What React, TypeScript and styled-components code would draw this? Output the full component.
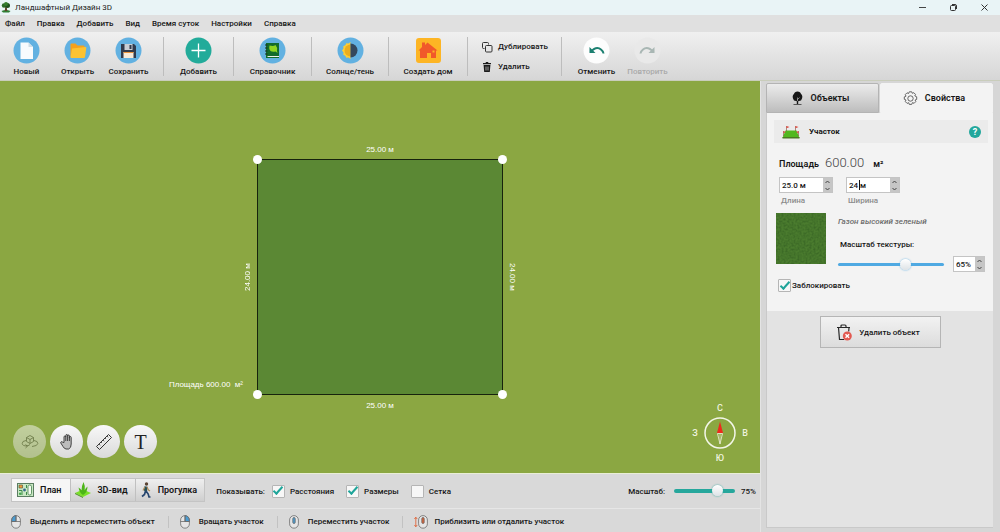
import React from 'react';
import styled, { createGlobalStyle, css } from 'styled-components';

const GlobalStyle = createGlobalStyle`
  *, *::before, *::after { box-sizing: border-box; }
  body {
    margin: 0;
    background: #d9d9d9;
    color: #161616;
    font-family: Roboto, "Liberation Sans", sans-serif;
    font-size: 8px;
    font-weight: 500;
  }
  button, input { font: inherit; color: inherit; }
  button { border: 0; padding: 0; background: none; cursor: pointer; }
  svg { display: block; flex: none; }
`;

const Page = styled.div`
  min-height: 100vh;
  display: flex;
  flex-direction: column;
`;

/* Window title and menu */
const TitleBar = styled.header`
  height: 15px;
  display: flex;
  align-items: center;
  justify-content: space-between;
  background: #e9f4f6;
`;
const AppTitle = styled.h1`
  margin: 0;
  padding-left: 1px;
  display: flex;
  align-items: center;
  gap: 4px;
  font-size: 8px;
  font-weight: 400;
  line-height: 14px;
  color: #222;
`;
const WindowControls = styled.div`
  display: flex;
`;
const WindowButton = styled.button`
  width: 31px;
  height: 15px;
  display: grid;
  place-items: center;
`;
const MenuBar = styled.nav`
  height: 17px;
  padding: 0 5px;
  display: flex;
  align-items: center;
  gap: 12px;
  background: #e0e0e0;
`;
const MenuItem = styled.button`
  line-height: 17px;
`;

/* Toolbar */
const Toolbar = styled.div`
  height: 49px;
  padding-left: 1px;
  display: flex;
  background: linear-gradient(#f0f0f0, #d6d6d6);
  border-bottom: 1px solid #c9cdbb;
`;
const ToolGroup = styled.div<{ $width: number; $last?: boolean; $start?: boolean }>`
  min-width: ${(p) => p.$width}px;
  margin: 5px 0 4px;
  display: flex;
  align-items: flex-start;
  justify-content: ${(p) => (p.$start ? 'flex-start' : 'center')};
  border-right: ${(p) => (p.$last ? 0 : '1px solid #bdbdbd')};
`;
const ToolButton = styled.button`
  min-width: 51px;
  display: flex;
  flex-direction: column;
  align-items: center;
  line-height: 16px;
  white-space: nowrap;
  &:disabled { color: #aaa; cursor: default; }
`;
const SmallTools = styled.div`
  padding-top: 2px;
  display: flex;
  flex-direction: column;
  gap: 5px;
`;
const SmallTool = styled.button`
  height: 15px;
  display: flex;
  align-items: center;
  gap: 5px;
`;

/* Workspace */
const Workspace = styled.div`
  flex: 1;
  display: flex;
`;
const Main = styled.main`
  flex: 1;
  min-width: 0;
  display: flex;
  flex-direction: column;
`;
const Canvas = styled.section`
  position: relative;
  flex: 1;
  min-height: 392px;
  overflow: hidden;
  background: #8ba742;
  color: #fff;
  font: 400 8px/10px "Liberation Sans", sans-serif;
`;
const Plot = styled.div`
  position: absolute;
  left: 257px;
  top: 78px;
  width: 246px;
  height: 236px;
  background: #5b8834;
  border: 1px solid #17230d;
`;
const Handle = styled.span<{ $x: 'left' | 'right'; $y: 'top' | 'bottom' }>`
  position: absolute;
  ${(p) => p.$x}: -5px;
  ${(p) => p.$y}: -5px;
  width: 9px;
  height: 9px;
  border-radius: 50%;
  background: #fff;
`;
const edges = {
  top: css`bottom: 100%; left: 0; right: 0; margin-bottom: 5px; text-align: center;`,
  bottom: css`top: 100%; left: 0; right: 0; margin-top: 7px; text-align: center;`,
  left: css`right: 100%; top: 0; bottom: 0; margin-right: 5px; text-align: center; writing-mode: vertical-rl; transform: rotate(180deg);`,
  right: css`left: 100%; top: 0; bottom: 0; margin-left: 5px; text-align: center; writing-mode: vertical-rl;`,
};
const EdgeLabel = styled.span<{ $edge: keyof typeof edges }>`
  position: absolute;
  ${(p) => edges[p.$edge]}
`;
const AreaLabel = styled.span`
  position: absolute;
  right: 100%;
  bottom: 4px;
  margin-right: 15px;
  white-space: pre;
`;
const CanvasTools = styled.div`
  position: absolute;
  left: 13px;
  bottom: 15px;
  display: flex;
  gap: 4px;
`;
const RoundTool = styled.button`
  width: 33px;
  height: 33px;
  display: grid;
  place-items: center;
  border-radius: 50%;
  background: linear-gradient(#f8f8f8, #dadada);
  color: #222;
  &:disabled { opacity: 0.5; }
`;
const TextGlyph = styled.span`
  font: 400 20px/22px "Liberation Serif", serif;
`;
const Compass = styled.div`
  position: absolute;
  right: 9px;
  bottom: 9px;
  display: grid;
  grid-template-columns: 12px 32px 12px;
  grid-template-rows: 12px 32px 12px;
  gap: 3px;
  place-items: center;
  font: 500 9px/12px Roboto, sans-serif;
  color: #eef3df;
`;
const North = styled.span`grid-area: 1 / 2;`;
const West = styled.span`grid-area: 2 / 1;`;
const Dial = styled.svg`grid-area: 2 / 2;`;
const East = styled.span`grid-area: 2 / 3;`;
const South = styled.span`grid-area: 3 / 2;`;

/* View switch and display options */
const ViewBar = styled.div`
  height: 36px;
  padding: 0 4px 0 11px;
  display: flex;
  align-items: center;
  background: #d9d9d9;
  border-top: 1px solid #e9eed6;
  border-bottom: 1px solid #e6e6e6;
`;
const Segments = styled.div`
  display: flex;
  height: 24px;
  margin: 0 11px 3px 0;
  border: 1px solid #c4c4c4;
`;
const Segment = styled.button<{ $active?: boolean }>`
  padding: 0 ${(p) => (p.$active ? 9 : 7)}px 0 ${(p) => (p.$active ? 5 : 4)}px;
  display: flex;
  align-items: center;
  gap: 6px;
  font-size: 9px;
  font-weight: 600;
  background: ${(p) => (p.$active ? '#f6f6f6' : 'linear-gradient(#efefef, #cfcfcf)')};
  & + & { border-left: 1px solid #c0c0c0; }
`;
const Options = styled.div`
  display: flex;
  align-items: center;
  gap: 12px;
`;
const OptionsTitle = styled.span`
  margin-right: -5px;
`;
const CheckLabel = styled.label<{ $gap: number }>`
  display: flex;
  align-items: center;
  gap: ${(p) => p.$gap}px;
`;
const CheckBox = styled.input`
  appearance: none;
  width: 13px;
  height: 13px;
  margin: 0;
  flex: none;
  display: grid;
  place-items: center;
  background: #f7f7f7;
  border: 1px solid #b5b5b5;
  border-radius: 1px;
  &:checked::after {
    content: "";
    width: 10px;
    height: 5px;
    margin-bottom: 3px;
    border: solid #1fa59a;
    border-width: 0 0 2px 2px;
    transform: rotate(-48deg);
  }
`;
const ZoomControl = styled.div`
  margin-left: auto;
  display: flex;
  align-items: center;
  gap: 6px;
`;
const ZoomLabel = styled.label`
  padding-right: 3px;
`;
const Slider = styled.input<{ $color: string; $height: number; $width: string }>`
  appearance: none;
  width: ${(p) => p.$width};
  height: 14px;
  margin: 0;
  background: transparent;
  &::-webkit-slider-runnable-track {
    height: ${(p) => p.$height}px;
    border-radius: 2px;
    background: ${(p) => p.$color};
  }
  &::-webkit-slider-thumb {
    appearance: none;
    width: 11px;
    height: 11px;
    margin-top: ${(p) => (p.$height - 11) >> 1}px;
    border-radius: 50%;
    background: linear-gradient(#fff, #dde2e6);
    box-shadow: 0 0 2px ${(p) => p.$color};
  }
`;

const StatusBar = styled.footer`
  height: 23px;
  padding-top: 2px;
  display: flex;
  align-items: center;
`;
const Hint = styled.span<{ $gap?: number }>`
  padding: 0 13px 0 11px;
  height: 12px;
  display: flex;
  align-items: center;
  gap: ${(p) => p.$gap ?? 9}px;
  & + & { border-left: 1px solid #c2c2c2; }
`;

/* Side panel */
const SidePanel = styled.aside`
  width: 240px;
  flex: none;
  display: flex;
  flex-direction: column;
  padding: 2px 7px 4px 5px;
  background: #d6d6d6;
  border-left: 1px solid #e4e4e4;
`;
const Tabs = styled.div`
  display: flex;
  gap: 1px;
  height: 30px;
`;
const Tab = styled.button<{ $active?: boolean }>`
  flex: 1;
  padding-right: 5px;
  display: flex;
  align-items: center;
  justify-content: center;
  gap: 7px;
  font-size: 9px;
  font-weight: 600;
  border-radius: 2px 2px 0 0;
  border: 1px solid ${(p) => (p.$active ? '#f3f3f3' : '#b4b4b4')};
  background: ${(p) => (p.$active ? '#f3f3f3' : 'linear-gradient(#ececec, #bdbdbd)')};
`;
const PanelBody = styled.div`
  flex: 1;
  background: #e3e3e3;
  border: solid #c9c9c9;
  border-width: 0 0 1px 1px;
`;
const Properties = styled.section`
  height: 198px;
  padding: 7px 5px 0 7px;
  background: #f3f3f3;
`;
const ObjectHeader = styled.h2`
  margin: 0;
  height: 23px;
  padding: 0 7px 0 8px;
  display: flex;
  align-items: center;
  gap: 9px;
  font-size: 8px;
  font-weight: 700;
  background: #ebebeb;
`;
const HelpButton = styled.button`
  margin-left: auto;
  width: 12px;
  height: 12px;
  border-radius: 50%;
  background: #22a79c;
  color: #fff;
  font-size: 9px;
  font-weight: 700;
  line-height: 12px;
`;
const AreaRow = styled.p`
  margin: 10px 0 0;
  padding-left: 5px;
  display: flex;
  align-items: baseline;
  font-size: 9px;
  font-weight: 600;
  line-height: 20px;
`;
const AreaValue = styled.output`
  margin: 0 9px 0 6px;
  font-size: 13px;
  font-weight: 300;
  color: #444;
`;
const Sizes = styled.div`
  margin-top: 3px;
  padding-left: 5px;
  display: flex;
  gap: 13px;
`;
const Field = styled.div`
  display: flex;
  flex-direction: column;
`;
const FieldLabel = styled.label`
  padding-left: 2px;
  line-height: 15px;
  color: #8b8b8b;
`;
const Spinner = styled.div<{ $width: number }>`
  position: relative;
  width: ${(p) => p.$width}px;
  height: 16px;
  display: flex;
  background: #fff;
  border: 1px solid #c4c4c4;
`;
const SpinnerInput = styled.input`
  flex: 1;
  min-width: 0;
  border: 0;
  padding: 0 2px;
  background: none;
  outline: 0;
`;
const Caret = styled.span`
  position: absolute;
  left: 12px;
  top: 2px;
  width: 1px;
  height: 10px;
  background: #111;
`;
const Steps = styled.div`
  width: 9px;
  display: grid;
  grid-template-rows: 1fr 1fr;
  background: #c6c6c6;
`;
const StepButton = styled.button`
  display: grid;
  place-items: center;
`;
const TextureRow = styled.div`
  margin-top: 5px;
  padding-left: 2px;
  display: flex;
  gap: 12px;
`;
const TextureInfo = styled.div`
  flex: 1;
  min-width: 0;
`;
const TextureName = styled.p`
  margin: 0;
  line-height: 18px;
  font-style: italic;
  color: #6c6c6c;
`;
const TextureLabel = styled.label`
  display: block;
  padding: 5px 0 0 2px;
  line-height: 18px;
`;
const TextureControl = styled.div`
  display: flex;
  align-items: center;
  gap: 9px;
  margin-top: 2px;
`;
const Lock = styled.div`
  margin-top: 7px;
  padding-left: 4px;
  display: flex;
`;
const DeleteButton = styled.button`
  width: 121px;
  height: 32px;
  margin: 5px auto 0;
  padding-right: 4px;
  display: flex;
  align-items: center;
  justify-content: center;
  gap: 7px;
  border: 1px solid #b5b5b5;
  background: linear-gradient(#f2f2f2, #dcdcdc);
`;

/* Icons */
const TreeLogo = () => (
  <svg width="10" height="11" viewBox="0 0 20 22">
    <path d="M1 18q9-4 18 0l-3 3H4z" fill="#2e7d32" />
    <path d="M8.500 10h3l1 8h-5z" fill="#5d4126" />
    <circle cx="6" cy="7" r="4.500" fill="#2b6b26" /><circle cx="13" cy="7" r="5" fill="#1d4f1d" /><circle cx="10" cy="4" r="4" fill="#347c2c" />
  </svg>
);
const NewIcon = () => (
  <svg width="27" height="27" viewBox="0 0 27 27">
    <circle cx="13.500" cy="13.500" r="13" fill="#62b1e1" />
    <path d="M7.500 5.500h8l4.500 4.500v12h-12.500z" fill="#f8fbfd" /><path d="M15.500 5.500v4.500h4.500z" fill="#cfdde6" />
  </svg>
);
const OpenIcon = () => (
  <svg width="27" height="27" viewBox="0 0 27 27">
    <circle cx="13.500" cy="13.500" r="13" fill="#62b1e1" />
    <path d="M6.500 7.500q0-1 1-1h4l2 2h6q1 0 1 1v10h-14z" fill="#f5a11c" />
    <path d="M8 11.500l13.500-1.500q1 0 .8 1l-1.300 9q-.2 1-1 1h-12.500q-1 0-1-1z" fill="#fdc331" />
  </svg>
);
const SaveIcon = () => (
  <svg width="27" height="27" viewBox="0 0 27 27">
    <circle cx="13.500" cy="13.500" r="13" fill="#62b1e1" />
    <path d="M6 7h13l2 2v12H6z" fill="#303a4c" />
    <path d="M9.500 7h8v6h-8z" fill="#c9ced4" /><path d="M14.500 8h2v4h-2z" fill="#303a4c" />
    <path d="M8.500 15h10v6h-10z" fill="#f8ead8" /><path d="M8.500 15.500h10" stroke="#e8943c" />
  </svg>
);
const AddIcon = () => (
  <svg width="27" height="27" viewBox="0 0 27 27">
    <circle cx="13.500" cy="13.500" r="13" fill="#22ab9a" />
    <path d="M13.500 6.500v14M6.500 13.500h14" stroke="#fff" strokeWidth="1.300" />
  </svg>
);
const BookIcon = () => (
  <svg width="27" height="27" viewBox="0 0 27 27">
    <circle cx="13.500" cy="13.500" r="13" fill="#62b1e1" />
    <path d="M7 6h13v15H7z" fill="#126b2b" /><path d="M8.500 19h11.500v1H8.500z" fill="#f1f1e6" />
    <path d="M10.500 8.500q4 1 6-.5 2 2 1.500 6l.5 2-2-1.500q-5 1-6-2-.5-2 0-4z" fill="#8ed421" />
    <path d="M6 8h2.500M6 11h2.500M6 14h2.500M6 17h2.500" stroke="#1c2c20" strokeWidth="1.200" />
  </svg>
);
const SunIcon = () => (
  <svg width="27" height="27" viewBox="0 0 27 27">
    <circle cx="13.500" cy="13.500" r="13" fill="#62b1e1" />
    <path d="M13.500 5l-2 1.500-2.200-.3-1 2-2 1 .2 2.300L5 13.500l1.500 2-.2 2.300 2 1 1 2 2.200-.3 2 1.500z" fill="#ffce32" />
    <path d="M13.500 7.500a6 6 0 0 0 0 12z" fill="#e9ad1f" />
    <path d="M13.500 6.500a7 7 0 0 1 0 14z" fill="#34485c" />
  </svg>
);
const HouseIcon = () => (
  <svg width="27" height="27" viewBox="0 0 27 27">
    <rect x="1" y="1" width="25" height="25" rx="3" fill="#fdb524" />
    <path d="M3.500 13.500L7 10V5.500h3V8l2.500-2.500 10 8h-1.500V21H16v-5h-4v5H5v-7.500z" fill="#f1592a" />
    <path d="M17.500 13.500h2v2h-2z" fill="#fdb524" />
  </svg>
);
const UndoIcon = ({ muted, flip }: { muted?: boolean; flip?: boolean }) => (
  <svg width="27" height="27" viewBox="0 0 27 27">
    <circle cx="13.500" cy="13.500" r="13" fill={muted ? '#e9e9e9' : '#fdfdfd'} />
    <g transform={flip ? 'translate(27 0) scale(-1 1)' : undefined} stroke={muted ? '#a9b7b4' : '#1b7f70'} fill="none">
      <path d="M7.500 15q6-6.500 10.500-2.500 2.500 2 2.500 4" strokeWidth="2" />
      <path d="M6.500 10v6h6z" fill={muted ? '#a9b7b4' : '#1b7f70'} stroke="none" />
    </g>
  </svg>
);
const CopyIcon = () => (
  <svg width="12" height="12" viewBox="0 0 12 12" fill="none" stroke="#333" strokeWidth="1">
    <path d="M3.500 7.500H2.500q-1 0-1-1v-4q0-1 1-1h4q1 0 1 1v1" /><rect x="4.500" y="4.500" width="6.500" height="6.500" rx="1" />
  </svg>
);
const TrashIcon = () => (
  <svg width="12" height="12" viewBox="0 0 12 12">
    <path d="M2 2h2.500l.5-1h2l.5 1H10v1.200H2zM2.600 4h6.800l-.6 7H3.200z" fill="#1b1b1b" />
    <path d="M5 5.500v4M7 5.500v4" stroke="#ddd" strokeWidth=".7" />
  </svg>
);
const OrbitIcon = () => (
  <svg width="18" height="18" viewBox="0 0 18 18" fill="none" stroke="#555" strokeWidth=".9">
    <path d="M9 2.500l3.500 2v4L9 10.500l-3.500-2v-4zM5.500 4.500L9 6.500l3.500-2M9 6.500v4" />
    <path d="M5 7.500Q1 8 1.200 10.500t4.800 2.500M13 7.500q4 .5 3.800 3t-5.800 3M9 11.500q-2 2-4 1M4.500 11.500l2 1.700-2 1.800" />
  </svg>
);
const HandIcon = () => (
  <svg width="16" height="18" viewBox="0 0 16 18" fill="#bcbcbc" stroke="#333" strokeWidth=".9" strokeLinejoin="round">
    <path d="M5 9.500V4q0-1 .9-1t.9 1V2.500q0-1 .9-1t.9 1V3q0-1 .9-1t.9 1v1.500q0-1 .9-1t.9 1V11q0 4-2.500 5H7Q5 15.500 4 13.500L1.800 10q-.3-1 .5-1.300.9-.2 1.500.6z" />
    <path d="M6.800 4v4M8.600 3v5M10.400 4v4" />
  </svg>
);
const RulerIcon = () => (
  <svg width="18" height="18" viewBox="0 0 18 18" fill="none" stroke="#333">
    <path d="M1.500 13.500l12-12 3 3-12 12z" /><path d="M4 11l1.300 1.300M6 9l1 1M8 7l1.300 1.300M10 5l1 1M12 3l1.300 1.300" strokeWidth=".8" />
  </svg>
);
const PlanIcon = () => (
  <svg width="17" height="14" viewBox="0 0 17 14">
    <rect x=".5" y=".5" width="16" height="13" fill="#c9e8c3" stroke="#5b7d62" />
    <path d="M2 2h3.500v3H2z" fill="#ef9a3b" stroke="#4b4c39" strokeWidth=".6" />
    <rect x="11" y="2" width="3.500" height="10" rx="1.700" fill="#f4fbef" stroke="#43804d" strokeWidth=".8" />
    <path d="M2 7.500h3v4.500M9.500 2v3M9.500 9v3" stroke="#3f8c4c" fill="none" /><circle cx="7.500" cy="7" r="1.400" fill="#34678e" />
    <circle cx="3.200" cy="10.700" r="1.300" fill="#46a851" />
  </svg>
);
const GrassIcon = () => (
  <svg width="16" height="16" viewBox="0 0 16 16">
    <path d="M0 11l8-3.500 8 3.500-8 4z" fill="#7be02a" /><path d="M0 11l8 4v1l-8-4z" fill="#4b9020" />
    <path d="M8 13Q4.500 11 3.500 5.500 6 7 6.500 8.500 6.500 4 8.500 0q2 4 1.200 8.500Q10.500 6 12.500 4.500 12.500 10.500 8 13z" fill="#4cb518" />
  </svg>
);
const WalkIcon = () => (
  <svg width="12" height="16" viewBox="0 0 12 16" fill="none">
    <circle cx="6.500" cy="2" r="1.700" fill="#5b4331" />
    <path d="M6 4.500L5.500 9" stroke="#274f56" strokeWidth="3.200" />
    <path d="M4.700 5L3 8.500M7 5l1.500 3 1.500 1" stroke="#b38b56" strokeWidth="1.100" />
    <path d="M5.500 9L4.500 12.500 2 14.500M6 9l2.200 3 .8 3h1.500" stroke="#27466f" strokeWidth="1.700" />
  </svg>
);
const MouseIcon = ({ button, arrows }: { button: 'left' | 'right' | 'middle'; arrows?: boolean }) => (
  <svg width={arrows ? 14 : 10} height="14" viewBox={arrows ? '-4 0 14 14' : '0 0 10 14'} fill="none" stroke="#6b6b6b" strokeWidth=".8">
    <rect x=".6" y=".6" width="8.800" height="12.600" rx="4.400" fill="#e5e5e5" />
    {button === 'left' && <path d="M5 .6Q.6.8.6 6.500H5z" fill="#4a9bd0" />}
    {button === 'right' && <path d="M5 .6q4.400.2 4.400 5.900H5z" fill="#4a9bd0" />}
    {button !== 'middle' && <path d="M.6 6.500h8.800M5 .6v6" />}
    {button === 'middle' && <rect x="3.800" y="2.500" width="2.400" height="6" rx="1.200" fill={arrows ? '#d66135' : '#4a9bd0'} />}
    {arrows && <path d="M-2.200 2.500v9M-3.600 4l1.400-1.800L-.8 4M-3.600 10l1.400 1.800L-.8 10" stroke="#e0592a" />}
  </svg>
);
const TreeTabIcon = () => (
  <svg width="13" height="15" viewBox="0 0 13 15">
    <path d="M6.500.5q3 0 3.500 2.500 2 1.500 1 4.500-.5 2.500-3 2.500l-.8.200V13h-1.400v-2.800L5 10Q2.500 10 2 7.500 1 4.500 3 3 3.500.5 6.500.5z" fill="#171717" />
    <path d="M2.500 13.500h8" stroke="#555" /><path d="M6.500 10V6.500M6.500 8.500L8.500 6.500" stroke="#ccc" strokeWidth=".6" />
  </svg>
);
const GearIcon = () => (
  <svg width="15" height="15" viewBox="0 0 15 15" fill="none" stroke="#555" strokeWidth=".9">
    <circle cx="7.500" cy="7.500" r="2.700" />
    <path d="M6.300.8h2.400l.6 1.500 1.500-.6 1.700 1.700-.7 1.500 1.900.9v2.600l-1.600.6.700 1.600-1.700 1.700-1.600-.7-.8 1.800H6.300l-.6-1.700-1.600.7-1.800-1.800.7-1.600-1.700-.7V5.900l1.700-.7-.7-1.700 1.700-1.700 1.600.7z" strokeLinejoin="round" />
  </svg>
);
const SiteIcon = () => (
  <svg width="18" height="14" viewBox="0 0 18 14">
    <path d="M3.500 5.500h11l3 7.500H.5z" fill="#51b81f" /><path d="M.5 12h17v1.500H.5z" fill="#4a7a22" />
    <path d="M4.500 1v5M13.500 1v5M1.500 6v5M16.500 6v5" stroke="#7d4a35" strokeWidth=".6" />
    <path d="M4.500 1l3 1-3 1.300zM13.500 1l3 1-3 1.300zM1.500 6l2.500 1-2.500 1.200zM16.500 6L14 7l2.500 1.200z" fill="#e0453c" />
  </svg>
);
const DeleteIcon = () => (
  <svg width="16" height="18" viewBox="0 0 16 18" fill="none" stroke="#272727">
    <path d="M1 4.500h13M5 4.500V3q0-1 1-1h3q1 0 1 1v1.500M2.500 4.500l1 12H8M13 4.500l-.3 4" strokeWidth="1.200" />
    <circle cx="11.300" cy="13" r="4.500" fill="#e25950" stroke="none" />
    <path d="M9.500 11.200l3.600 3.600M13.100 11.200l-3.600 3.600" stroke="#fff" strokeWidth="1.400" />
  </svg>
);
const Lawn = () => (
  <svg width="50" height="51" viewBox="0 0 50 51">
    <filter id="grass" x="0" y="0" width="1" height="1" colorInterpolationFilters="sRGB">
      <feTurbulence type="fractalNoise" baseFrequency=".5" numOctaves="2" seed="4" />
      <feColorMatrix values="0 0 0 0 .1  0 0 0 0 .25  0 0 0 0 .08  2 0 0 0 -.7" />
    </filter>
    <rect width="50" height="51" fill="#4a7b2e" /><rect width="50" height="51" filter="url(#grass)" opacity=".35" />
  </svg>
);
const Chevron = ({ down }: { down?: boolean }) => (
  <svg width="5" height="4" viewBox="0 0 5 4" fill="none" stroke="#444">
    <path d={down ? 'M.5 1l2 2 2-2' : 'M.5 3l2-2 2 2'} />
  </svg>
);

const StepButtons = () => (
  <Steps>
    <StepButton aria-label="Больше"><Chevron /></StepButton>
    <StepButton aria-label="Меньше"><Chevron down /></StepButton>
  </Steps>
);

const menu = ['Файл', 'Правка', 'Добавить', 'Вид', 'Время суток', 'Настройки', 'Справка'];

export default function App() {
  return (
    <Page>
      <GlobalStyle />
      <TitleBar>
        <AppTitle><TreeLogo />Ландшафтный Дизайн 3D</AppTitle>
        <WindowControls>
          <WindowButton aria-label="Свернуть"><svg width="7" height="7" viewBox="0 0 7 7"><path d="M0 3.500h7" stroke="#444" /></svg></WindowButton>
          <WindowButton aria-label="Развернуть"><svg width="7" height="7" viewBox="0 0 7 7" fill="none" stroke="#333"><rect x=".5" y="1.500" width="5" height="5" rx="1" /><path d="M2 .5h3q1.500 0 1.500 1.500v3" /></svg></WindowButton>
          <WindowButton aria-label="Закрыть"><svg width="7" height="7" viewBox="0 0 7 7" stroke="#333"><path d="M.5.5l6 6M6.500.5l-6 6" /></svg></WindowButton>
        </WindowControls>
      </TitleBar>
      <MenuBar>{menu.map((m) => <MenuItem key={m}>{m}</MenuItem>)}</MenuBar>
      <Toolbar>
        <ToolGroup $width={163} $start>
          <ToolButton><NewIcon />Новый</ToolButton>
          <ToolButton><OpenIcon />Открыть</ToolButton>
          <ToolButton><SaveIcon />Сохранить</ToolButton>
        </ToolGroup>
        <ToolGroup $width={70}><ToolButton><AddIcon />Добавить</ToolButton></ToolGroup>
        <ToolGroup $width={78}><ToolButton><BookIcon />Справочник</ToolButton></ToolGroup>
        <ToolGroup $width={77}><ToolButton><SunIcon />Солнце/тень</ToolButton></ToolGroup>
        <ToolGroup $width={79}><ToolButton><HouseIcon />Создать дом</ToolButton></ToolGroup>
        <ToolGroup $width={94}>
          <SmallTools>
            <SmallTool><CopyIcon />Дублировать</SmallTool>
            <SmallTool><TrashIcon />Удалить</SmallTool>
          </SmallTools>
        </ToolGroup>
        <ToolGroup $width={120} $last>
          <ToolButton><UndoIcon />Отменить</ToolButton>
          <ToolButton disabled><UndoIcon muted flip />Повторить</ToolButton>
        </ToolGroup>
      </Toolbar>

      <Workspace>
        <Main>
          <Canvas>
            <Plot>
              <EdgeLabel $edge="top">25.00 м</EdgeLabel>
              <EdgeLabel $edge="bottom">25.00 м</EdgeLabel>
              <EdgeLabel $edge="left">24.00 м</EdgeLabel>
              <EdgeLabel $edge="right">24.00 м</EdgeLabel>
              <AreaLabel>{'Площадь 600.00  м²'}</AreaLabel>
              <Handle $x="left" $y="top" />
              <Handle $x="right" $y="top" />
              <Handle $x="left" $y="bottom" />
              <Handle $x="right" $y="bottom" />
            </Plot>
            <CanvasTools>
              <RoundTool disabled aria-label="Вращать"><OrbitIcon /></RoundTool>
              <RoundTool aria-label="Переместить"><HandIcon /></RoundTool>
              <RoundTool aria-label="Линейка"><RulerIcon /></RoundTool>
              <RoundTool aria-label="Текст"><TextGlyph>T</TextGlyph></RoundTool>
            </CanvasTools>
            <Compass>
              <North>С</North>
              <West>З</West>
              <Dial width="32" height="32" viewBox="0 0 32 32">
                <circle cx="16" cy="16" r="15" fill="none" stroke="#f3f6e8" strokeWidth="1.500" />
                <path d="M16 4.500l3 11.500h-6z" fill="#ee2a1c" />
                <path d="M13.500 16.500h5L16 27z" fill="none" stroke="#e6e9cf" strokeWidth=".9" /><path d="M16 16.500V27" stroke="#e6e9cf" strokeWidth=".6" />
              </Dial>
              <East>В</East>
              <South>Ю</South>
            </Compass>
          </Canvas>

          <ViewBar>
            <Segments>
              <Segment $active><PlanIcon />План</Segment>
              <Segment><GrassIcon />3D-вид</Segment>
              <Segment><WalkIcon />Прогулка</Segment>
            </Segments>
            <Options>
              <OptionsTitle>Показывать:</OptionsTitle>
              <CheckLabel $gap={5}><CheckBox type="checkbox" defaultChecked />Расстояния</CheckLabel>
              <CheckLabel $gap={5}><CheckBox type="checkbox" defaultChecked />Размеры</CheckLabel>
              <CheckLabel $gap={5}><CheckBox type="checkbox" />Сетка</CheckLabel>
            </Options>
            <ZoomControl>
              <ZoomLabel htmlFor="zoom">Масштаб:</ZoomLabel>
              <Slider id="zoom" type="range" defaultValue={75} $color="#26a79c" $height={4} $width="61px" />
              <output htmlFor="zoom">75%</output>
            </ZoomControl>
          </ViewBar>
          <StatusBar>
            <Hint><MouseIcon button="left" />Выделить и переместить объект</Hint>
            <Hint><MouseIcon button="right" />Вращать участок</Hint>
            <Hint><MouseIcon button="middle" />Переместить участок</Hint>
            <Hint $gap={6}><MouseIcon button="middle" arrows />Приблизить или отдалить участок</Hint>
          </StatusBar>
        </Main>

        <SidePanel>
          <Tabs role="tablist">
            <Tab role="tab" aria-selected={false}><TreeTabIcon />Объекты</Tab>
            <Tab role="tab" aria-selected $active><GearIcon />Свойства</Tab>
          </Tabs>
          <PanelBody>
            <Properties>
              <ObjectHeader><SiteIcon />Участок<HelpButton aria-label="Помощь">?</HelpButton></ObjectHeader>
              <AreaRow>Площадь<AreaValue>600.00</AreaValue>м²</AreaRow>
              <Sizes>
                <Field>
                  <Spinner $width={54}><SpinnerInput id="length" defaultValue="25.0 м" /><StepButtons /></Spinner>
                  <FieldLabel htmlFor="length">Длина</FieldLabel>
                </Field>
                <Field>
                  <Spinner $width={54}><SpinnerInput id="width" defaultValue="24 м" /><Caret /><StepButtons /></Spinner>
                  <FieldLabel htmlFor="width">Ширина</FieldLabel>
                </Field>
              </Sizes>
              <TextureRow>
                <Lawn />
                <TextureInfo>
                  <TextureName>Газон высокий зеленый</TextureName>
                  <TextureLabel htmlFor="texture">Масштаб текстуры:</TextureLabel>
                  <TextureControl>
                    <Slider id="texture" type="range" defaultValue={65} $color="#4fa9e2" $height={3} $width="106px" />
                    <Spinner $width={32}><SpinnerInput aria-label="Масштаб" defaultValue="65%" /><StepButtons /></Spinner>
                  </TextureControl>
                </TextureInfo>
              </TextureRow>
              <Lock>
                <CheckLabel $gap={1}><CheckBox type="checkbox" defaultChecked />Заблокировать</CheckLabel>
              </Lock>
            </Properties>
            <DeleteButton><DeleteIcon />Удалить объект</DeleteButton>
          </PanelBody>
        </SidePanel>
      </Workspace>
    </Page>
  );
}
